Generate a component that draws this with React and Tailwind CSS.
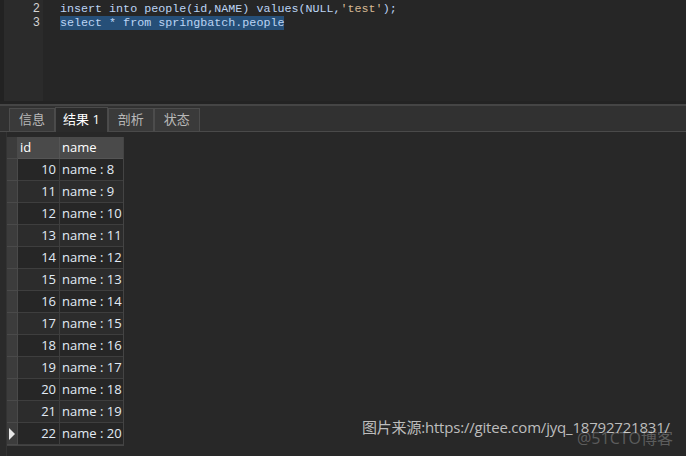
const rows = [
  [10, 8], [11, 9], [12, 10], [13, 11], [14, 12], [15, 13], [16, 14],
  [17, 15], [18, 16], [19, 17], [20, 18], [21, 19], [22, 20],
]

const tabs = ['信息', '结果 1', '剖析', '状态']

const mono = { fontFamily: '"Liberation Mono", "DejaVu Sans Mono", monospace' }

export default function App() {
  return (
    <div className="w-[686px] h-[456px] overflow-hidden bg-[#282828] flex flex-col relative font-['Open_Sans','Noto_Sans_CJK_SC',sans-serif]">
      {/* editor */}
      <div className="h-[101px] flex bg-[#262626] shrink-0">
        <div className="w-[4px] bg-[#222222]" />
        <div className="w-[39px] bg-[#2b2b2b] flex flex-col items-end pr-[3px] pt-[2px] text-[#d4d4d4] text-[12px] leading-[14px]" style={mono}>
          <div>2</div>
          <div>3</div>
        </div>
        <div className="pl-[17px] pt-[1px] text-[11.7px] leading-[14px] text-[#bcd4f4] whitespace-pre" style={mono}>
          <div className="pt-px">insert into people(id,NAME) values(NULL,<span className="text-[#d6b894]">'test'</span>);</div>
          <div><span className="bg-[#264f78] inline-block h-[14px] leading-[14px]">select * from springbatch.people</span></div>
        </div>
      </div>
      <div className="h-[3px] bg-[#232323] shrink-0" />
      <div className="h-[2px] bg-[#454545] shrink-0" />

      {/* tab bar */}
      <div className="h-[26px] bg-[#313131] border-b border-[#4a4a4a] flex items-end pl-[9px] shrink-0">
        {tabs.map((t, i) => (
          <div
            key={t}
            className={
              i === 1
                ? 'h-[25px] -mb-px px-[7px] flex items-center bg-[#2b2b2b] border border-b-0 border-[#4a4a4a] text-white text-[13px]'
                : 'h-[23px] px-[9px] flex items-center bg-[#3a3a3a] border border-b-0 border-[#4c4c4c] text-[#b8b8b8] text-[13px]'
            }
          >
            {t}
          </div>
        ))}
      </div>

      {/* result grid */}
      <div className="flex flex-1 min-h-0">
        <div className="w-[7px] bg-[#2a2a2a] border-r border-[#333333]" />
        <div className="pt-[5px]">
          <div className="flex flex-col border-r border-b border-[#444444] text-[13px] leading-none">
            <div className="flex h-[22px]">
              <div className="w-[11px] bg-[#3c3c3c] border-r border-b border-[#4a4a4a]" />
              <div className="w-[42px] bg-[#4a4a4a] border-r border-b border-[#555555] pl-[2px] flex items-center text-white">id</div>
              <div className="w-[63px] bg-[#4a4a4a] border-b border-[#555555] pl-[2px] flex items-center text-white">name</div>
            </div>
            {rows.map(([id, n], i) => (
              <div key={id} className={`flex h-[22px] ${i % 2 ? 'bg-[#2c2c2c]' : 'bg-[#262626]'}`}>
                <div className="w-[11px] bg-[#3c3c3c] border-r border-b border-[#4a4a4a] flex items-center justify-center">
                  {id === 22 && (
                    <svg width="6" height="12" viewBox="0 0 6 12"><path d="M0 0 L6 6 L0 12 Z" fill="#e8e8e8" /></svg>
                  )}
                </div>
                <div className="w-[42px] border-r border-b border-[#3e3e3e] pr-[3px] flex items-center justify-end text-[#e2ebf5]">{id}</div>
                <div className="w-[63px] border-b border-[#3e3e3e] pl-[2px] flex items-center text-[#e2ebf5] whitespace-pre">name : {n}</div>
              </div>
            ))}
          </div>
        </div>
      </div>

      {/* watermark */}
      <div className="absolute left-[362px] top-[417px] text-[15px] leading-[20px] text-[#bdbdbd] whitespace-nowrap tracking-[-0.2px]">
        图片来源:https://gitee.com/jyq_18792721831/
      </div>
      <div className="absolute left-[577px] top-[428px] text-[16px] leading-[20px] text-[#ffffff]/25 whitespace-nowrap">
        @51CTO博客
      </div>
    </div>
  )
}
